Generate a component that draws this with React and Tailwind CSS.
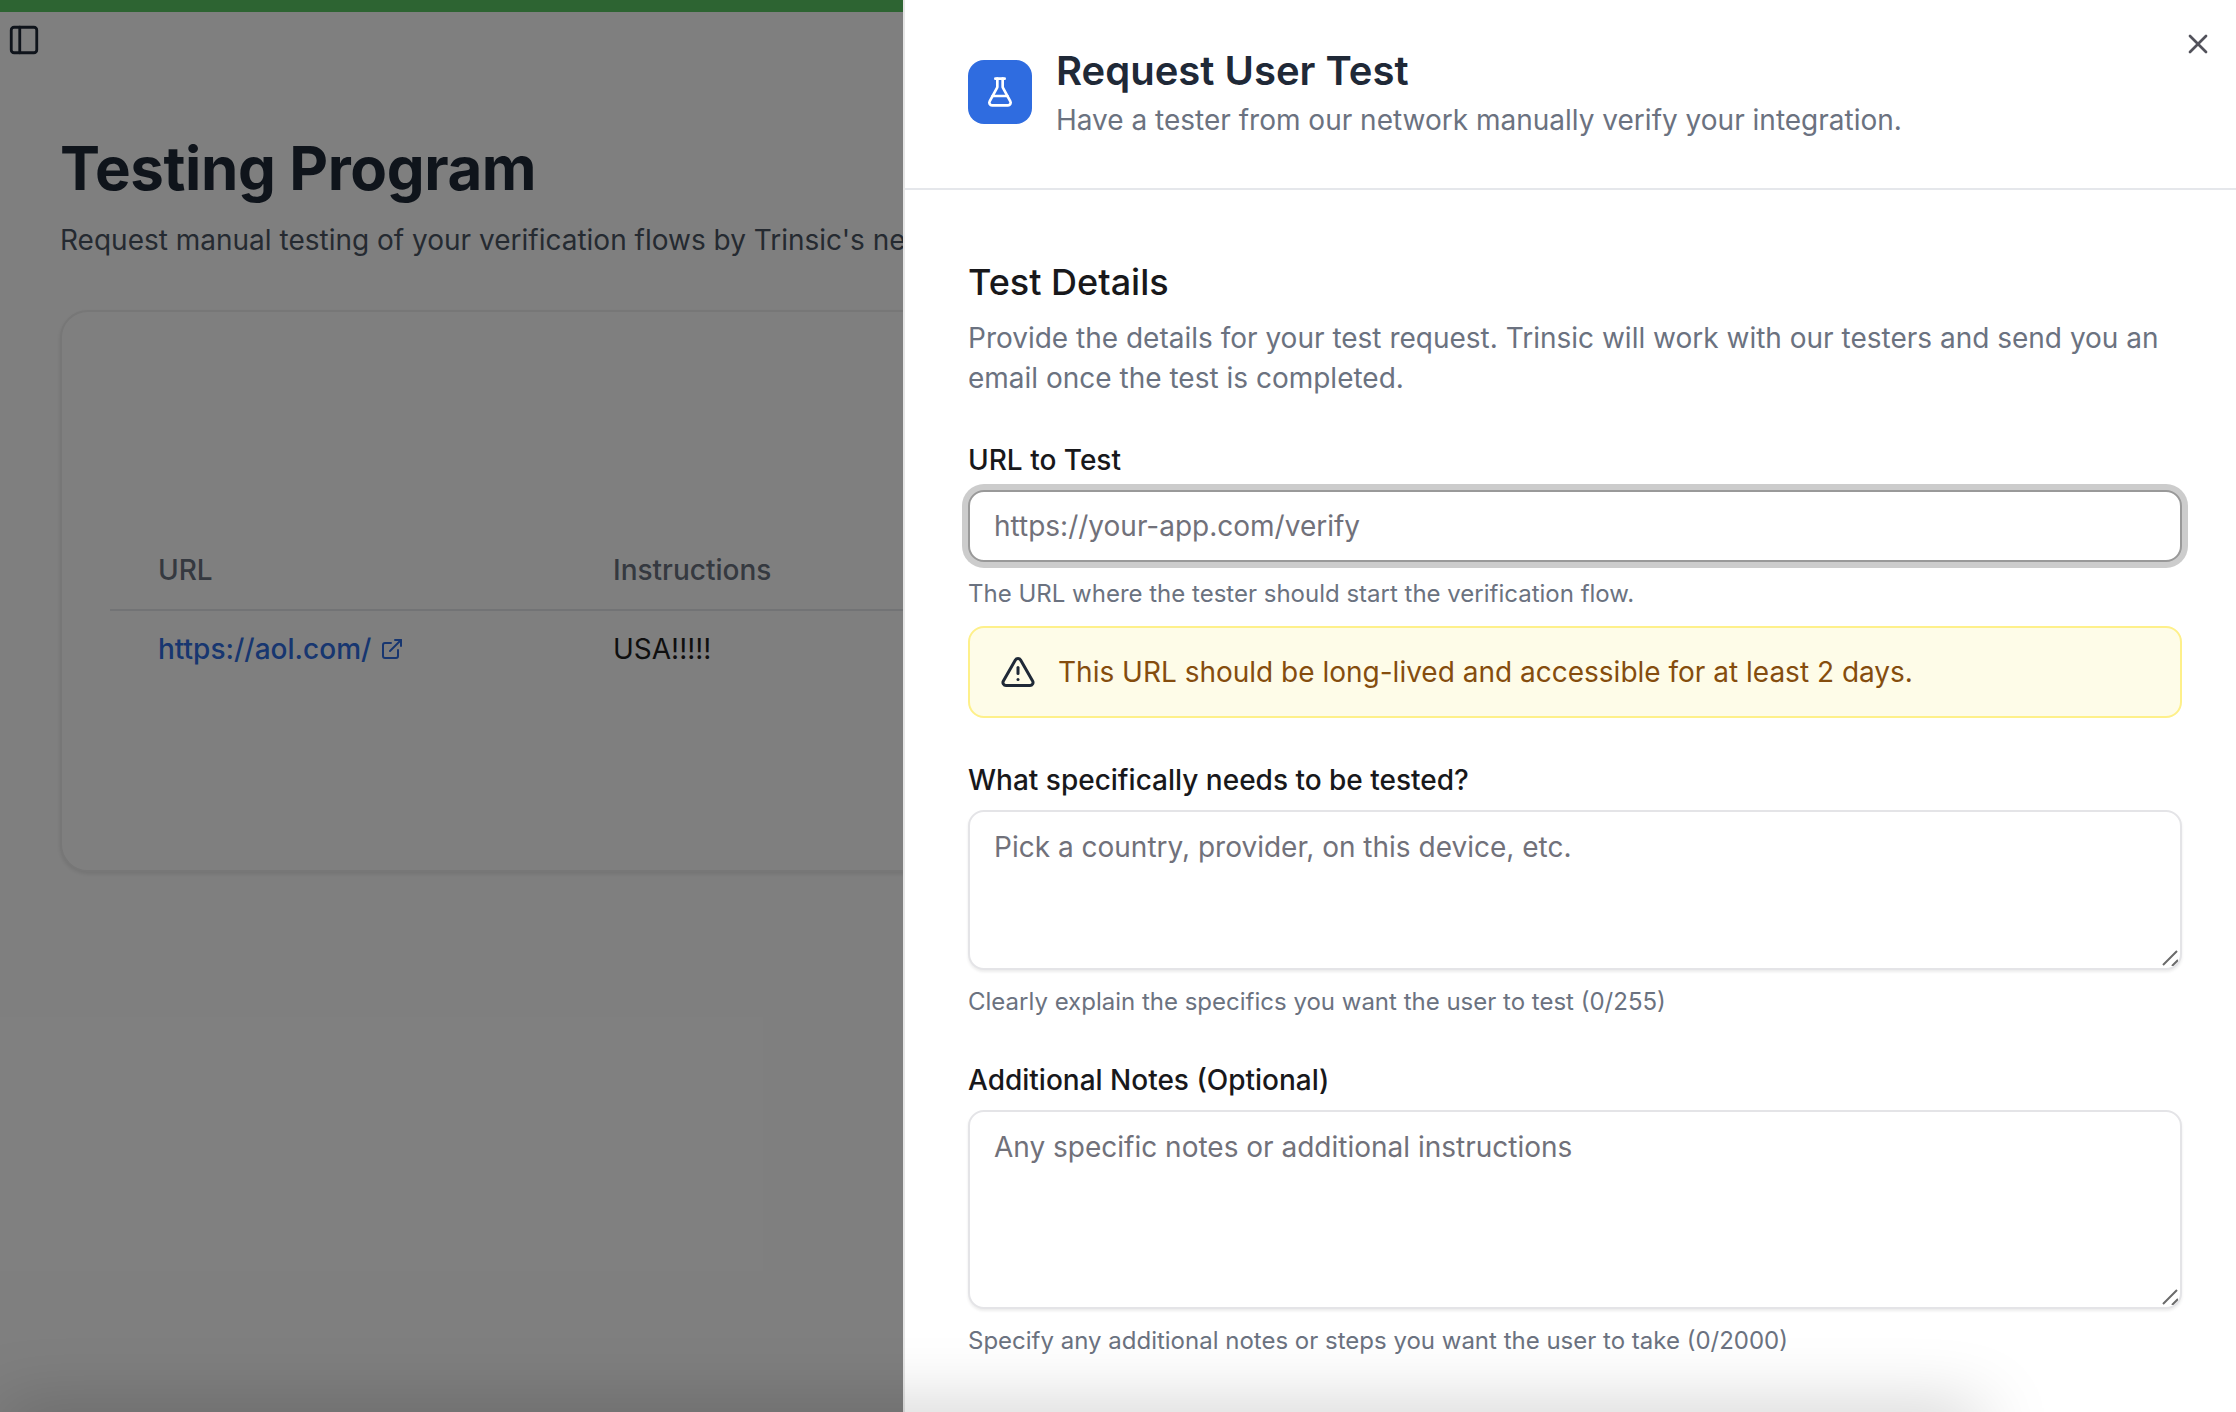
import { FlaskConical, X, TriangleAlert, PanelLeft, ExternalLink } from 'lucide-react';

function ResizeGrip() {
  return (
    <svg className="pointer-events-none absolute bottom-[4px] right-[4px] h-4 w-4 text-[#6b6b6b]" viewBox="0 0 16 16" fill="none" stroke="currentColor" strokeWidth="2">
      <path d="M1 15 15 1M10 16l6-6" />
    </svg>
  );
}

function Field({ label, hint, placeholder, height, className }) {
  return (
    <div className={className}>
      <label className="block text-[28px] leading-[40px] font-medium text-[#18181b]">{label}</label>
      <div className="relative mt-[10px]">
        <textarea
          readOnly
          placeholder={placeholder}
          className={`block w-full ${height} resize-none rounded-2xl border-2 border-[#e4e4e7] bg-white px-6 py-[15px] text-[28px] leading-[40px] text-[#18181b] shadow-[0_2px_3px_rgba(0,0,0,0.08)] outline-none placeholder:text-[#71717a]`}
        />
        <ResizeGrip />
      </div>
      <p className="mt-[12px] text-[24px] leading-[40px] text-[#6b7280]">{hint}</p>
    </div>
  );
}

function RequestPanel() {
  return (
    <aside className="absolute inset-y-0 right-0 w-[1333px] overflow-hidden border-l-2 border-[#e5e5e5] bg-white">
      <button className="absolute right-[22px] top-[28px] text-[#52525b]">
        <X size={32} />
      </button>

      <header className="flex h-[190px] items-start gap-6 border-b-2 border-[#e5e7eb] pl-[63px] pt-[48px]">
        <div className="mt-[12px] flex h-16 w-16 items-center justify-center rounded-2xl bg-[#2f6ce0] text-white">
          <FlaskConical size={32} />
        </div>
        <div>
          <h2 className="text-[40px] leading-[46px] font-semibold text-[#1f2937]">Request User Test</h2>
          <p className="mt-[6px] text-[28px] leading-[40px] text-[#6b7280]">
            Have a tester from our network manually verify your integration.
          </p>
        </div>
      </header>

      <div className="pl-[63px] pr-[54px] pt-[68px]">
        <h3 className="text-[36px] leading-[48px] font-medium text-[#18181b]">Test Details</h3>
        <p className="mt-[12px] text-[28px] leading-[40px] text-[#6b7280]">
          Provide the details for your test request. Trinsic will work with our testers and send you an email once the test is completed.
        </p>

        <div className="mt-[42px]">
          <label className="block text-[28px] leading-[40px] font-medium text-[#18181b]">URL to Test</label>
          <input
            readOnly
            placeholder="https://your-app.com/verify"
            className="mt-[10px] block h-[72px] w-full rounded-2xl border-2 border-[#999999] bg-white px-6 text-[28px] text-[#18181b] outline-none ring-[6px] ring-[#cccccc] placeholder:text-[#71717a]"
          />
          <p className="mt-[12px] text-[24px] leading-[40px] text-[#6b7280]">
            The URL where the tester should start the verification flow.
          </p>
        </div>

        <div className="mt-[12px] flex h-[92px] items-center gap-[22px] rounded-2xl border-2 border-[#fef08a] bg-[#fefce8] pl-[30px]">
          <TriangleAlert size={36} className="shrink-0 text-[#1f2937]" />
          <span className="text-[28px] leading-[40px] text-[#854d0e]">
            This URL should be long-lived and accessible for at least 2 days.
          </span>
        </div>

        <Field
          className="mt-[42px]"
          label="What specifically needs to be tested?"
          placeholder="Pick a country, provider, on this device, etc."
          hint="Clearly explain the specifics you want the user to test (0/255)"
          height="h-[160px]"
        />
        <Field
          className="mt-[38px]"
          label="Additional Notes (Optional)"
          placeholder="Any specific notes or additional instructions"
          hint="Specify any additional notes or steps you want the user to take (0/2000)"
          height="h-[199px]"
        />
      </div>
    </aside>
  );
}

export default function App() {
  return (
    <div className="relative h-[1412px] w-[2236px] overflow-hidden bg-white font-['Inter',sans-serif]">
      <div className="h-3 bg-[#5ac864]" />
      <div className="flex h-[46px] items-center pl-[7px] pt-[10px] text-[#1f2937]">
        <PanelLeft size={34} />
      </div>

      <main className="pl-[60px]">
        <h1 className="mt-[80px] text-[60px] leading-[60px] font-bold tracking-[-0.4px] text-[#1f2937]">Testing Program</h1>
        <p className="mt-[22px] whitespace-nowrap text-[28px] leading-[40px] text-[#4b5563]">
          Request manual testing of your verification flows by Trinsic's network of testers.
        </p>

        <section className="mt-[50px] h-[562px] w-[1600px] rounded-[28px] border-2 border-[#eeeeee] bg-white pl-[48px] pr-[48px] pt-[238px] shadow-[0_2px_4px_rgba(0,0,0,0.1)]">
          <div className="grid grid-cols-[455px_1fr] border-b-2 border-[#e5e7eb] pb-[19px] pl-[48px]">
            <span className="text-[28px] leading-[40px] font-medium text-[#6b7280]">URL</span>
            <span className="text-[28px] leading-[40px] font-medium text-[#6b7280]">Instructions</span>
          </div>
          <div className="grid grid-cols-[455px_1fr] pl-[48px] pt-[18px]">
            <a className="flex items-center gap-[9px] text-[28px] leading-[40px] font-medium text-[#2f6ce0]">
              https://aol.com/
              <ExternalLink size={24} />
            </a>
            <span className="text-[28px] leading-[40px] text-[#1f1f1f]">USA!!!!!</span>
          </div>
        </section>
      </main>

      <div className="absolute inset-0 bg-black/50" />
      <RequestPanel />
      <div className="absolute left-0 top-[1412px] h-10 w-[1980px] shadow-[0_0_70px_rgba(0,0,0,0.25)]" />
    </div>
  );
}
